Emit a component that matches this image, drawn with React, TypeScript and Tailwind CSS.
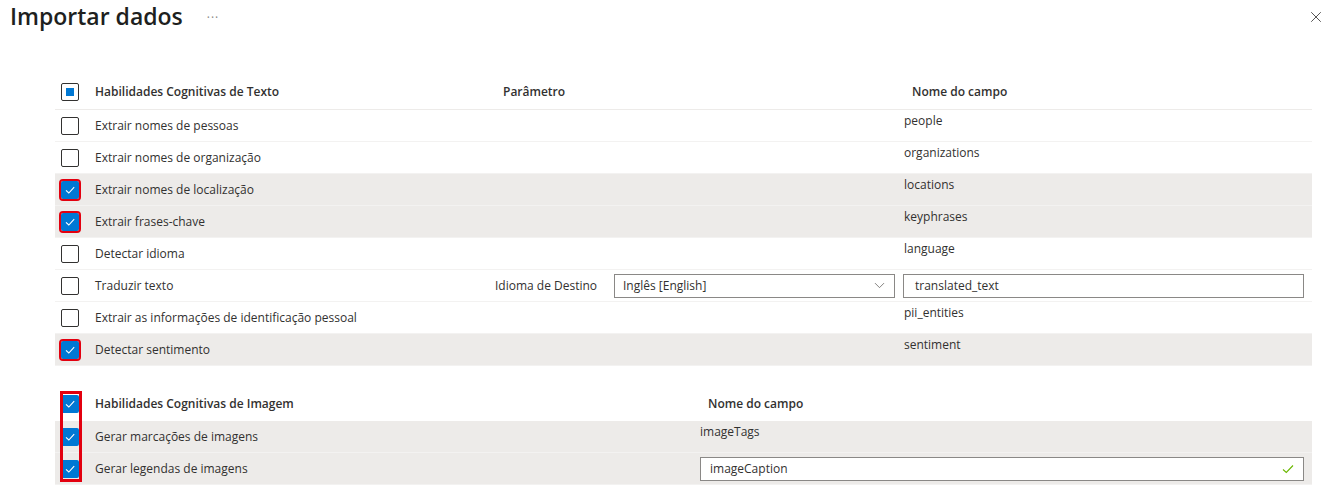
import { ChevronDown, X } from "lucide-react";

type Row = {
  label: string;
  field?: string;
  checked?: boolean;
  flagged?: boolean;
  shaded?: boolean;
  translate?: boolean;
};

const textRows: Row[] = [
  { label: "Extrair nomes de pessoas", field: "people" },
  { label: "Extrair nomes de organização", field: "organizations" },
  { label: "Extrair nomes de localização", field: "locations", checked: true, flagged: true, shaded: true },
  { label: "Extrair frases-chave", field: "keyphrases", checked: true, flagged: true, shaded: true },
  { label: "Detectar idioma", field: "language" },
  { label: "Traduzir texto", translate: true },
  { label: "Extrair as informações de identificação pessoal", field: "pii_entities" },
  { label: "Detectar sentimento", field: "sentiment", checked: true, flagged: true, shaded: true },
];

function CheckMark() {
  return (
    <svg width="12" height="12" viewBox="0 0 12 12" fill="none">
      <path d="M2 6.3 L4.8 9 L10.2 3.2" stroke="white" strokeWidth="1.1" />
    </svg>
  );
}

function Checkbox({ checked, flagged, partial }: { checked?: boolean; flagged?: boolean; partial?: boolean }) {
  if (checked) {
    return (
      <div
        className={`w-[18px] h-[18px] rounded-[2px] bg-[#0078d4] flex items-center justify-center ${
          flagged ? "outline-2 outline-[#e3000f]" : ""
        }`}
      >
        <CheckMark />
      </div>
    );
  }
  return (
    <div className="w-[18px] h-[18px] rounded-[2px] border border-[#323130] bg-white flex items-center justify-center">
      {partial && <div className="w-[8px] h-[8px] bg-[#0078d4]" />}
    </div>
  );
}

export default function App() {
  return (
    <div
      className="w-[1339px] h-[503px] bg-white text-[#323130] overflow-hidden"
      style={{ fontFamily: '"Open Sans", "Noto Sans", sans-serif' }}
    >
      {/* Title bar */}
      <div className="flex items-center h-[36px] pl-[10px] pr-[14px] -mt-[2px]">
        <h1 className="text-[23px] font-semibold leading-none text-[#201f1e]">Importar dados</h1>
        <span className="ml-[24px] mt-[3px] text-[12px] text-[#8a8886] tracking-[1px]">···</span>
        <X className="ml-auto mt-[1px] w-[18px] h-[18px] text-[#323130]" strokeWidth={1.1} />
      </div>

      {/* Text skills */}
      <div className="mt-[41px] ml-[55px] w-[1257px] text-[12px]">
        <div className="flex items-center h-[35px] border-b border-[#edebe9] font-semibold">
          <div className="w-[40px] pl-[6px]">
            <Checkbox partial />
          </div>
          <div className="w-[400px]">Habilidades Cognitivas de Texto</div>
          <div className="w-[409px] pl-[8px]">Parâmetro</div>
          <div className="pl-[8px]">Nome do campo</div>
        </div>

        {textRows.map((r) => (
          <div
            key={r.label}
            className={`flex items-center h-[32px] border-b border-[#f3f2f1] ${r.shaded ? "bg-[#edebe9]" : ""}`}
          >
            <div className="w-[40px] pl-[6px]">
              <Checkbox checked={r.checked} flagged={r.flagged} />
            </div>
            <div className="w-[400px]">{r.label}</div>
            {r.translate ? (
              <>
                <div className="w-[409px] flex items-center">
                  <span className="w-[119px]">Idioma de Destino</span>
                  <div className="w-[281px] h-[24px] border border-[#8a8886] flex items-center pl-[8px] pr-[6px]">
                    <span>Inglês [English]</span>
                    <ChevronDown className="ml-auto w-[17px] h-[17px] text-[#605e5c]" strokeWidth={1.1} />
                  </div>
                </div>
                <div className="w-[401px] -ml-[1px] h-[24px] border border-[#8a8886] flex items-center pl-[11px]">
                  translated_text
                </div>
              </>
            ) : (
              <>
                <div className="w-[409px]" />
                <div className="self-start pt-[2px]">{r.field}</div>
              </>
            )}
          </div>
        ))}
      </div>

      {/* Image skills */}
      <div className="relative mt-[20px] ml-[55px] w-[1257px] text-[12px]">
        <div className="flex items-center h-[35px] font-semibold">
          <div className="w-[40px] pl-[6px]">
            <Checkbox checked />
          </div>
          <div className="w-[605px]">Habilidades Cognitivas de Imagem</div>
          <div className="pl-[8px]">Nome do campo</div>
        </div>
        <div className="flex items-center h-[32px] border-b border-[#f3f2f1] bg-[#edebe9]">
          <div className="w-[40px] pl-[6px]">
            <Checkbox checked />
          </div>
          <div className="w-[605px]">Gerar marcações de imagens</div>
          <div className="self-start pt-[2px]">imageTags</div>
        </div>
        <div className="flex items-center h-[32px] border-b border-[#f3f2f1] bg-[#edebe9]">
          <div className="w-[40px] pl-[6px]">
            <Checkbox checked />
          </div>
          <div className="w-[605px]">Gerar legendas de imagens</div>
          <div className="w-[604px] h-[24px] border border-[#8a8886] bg-white flex items-center pl-[9px] pr-[8px]">
            <span>imageCaption</span>
            <svg className="ml-auto" width="14" height="14" viewBox="0 0 14 14" fill="none">
              <path d="M2 7.5 L5.3 10.5 L12 3.5" stroke="#6bb700" strokeWidth="1.1" />
            </svg>
          </div>
        </div>
        {/* highlight around image checkboxes */}
        <div className="absolute left-[5px] top-[5px] w-[22px] h-[91px] border-[3px] border-[#e3000f] pointer-events-none" />
      </div>
    </div>
  );
}
